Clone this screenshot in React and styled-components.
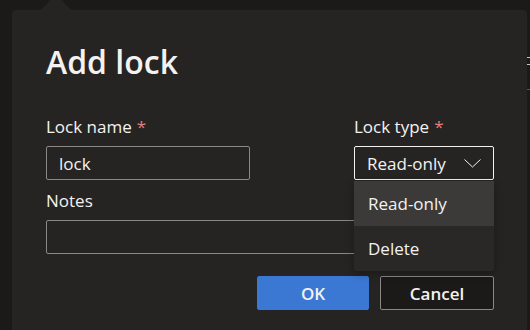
import React from 'react'
import styled, { createGlobalStyle } from 'styled-components'

const GlobalStyle = createGlobalStyle`
    html, body {
        margin: 0;
        padding: 0;
        background: #1b1a19;
    }
    * {
        box-sizing: border-box;
    }
`

const Page = styled.div`
    display: flex;
    width: 530px;
    height: 330px;
    overflow: hidden;
    padding: 10px 0 0 12px;
    background: #1b1a19;
    font-family: "Open Sans", "Noto Sans", sans-serif;
    color: #f3f2f1;
`

const Panel = styled.div`
    position: relative;
    width: 515px;
    background: #252423;
    border-radius: 4px 4px 0 0;
    padding: 32px 33px 0 34px;
`

const Beak = styled.div`
    position: absolute;
    left: 33px;
    top: -11px;
    width: 22px;
    height: 22px;
    background: #252423;
    transform: rotate(45deg);
`

const Edge = styled.div`
    flex: 1;
    display: flex;
    flex-direction: column;
    padding-top: 47px;
    gap: 6px;
`

const EdgeMark = styled.div`
    height: 1px;
    background: ${props => props.faint ? '#5a5856' : '#c8c6c4'};
    margin-top: ${props => props.gap || 0}px;
`

const Title = styled.h1`
    position: relative;
    margin: 0 0 34px;
    font-size: 32px;
    line-height: 40px;
    font-weight: 600;
`

const Row = styled.div`
    display: flex;
    justify-content: space-between;
`

const Field = styled.div`
    width: ${props => props.width}px;
    margin-top: ${props => props.top || 0}px;
`

const Label = styled.div`
    font-size: 17px;
    line-height: 22px;
    margin-bottom: 8px;
`

const Required = styled.span`
    color: #e37d80;
    margin-left: 5px;
`

const Control = styled.div`
    position: relative;
`

const Input = styled.div`
    height: 34px;
    border: 1px solid ${props => props.active ? '#f3f2f1' : '#8a8886'};
    border-radius: 2px;
    padding: 0 12px;
    display: flex;
    align-items: center;
    justify-content: space-between;
    font-size: 17px;
`

const Menu = styled.div`
    position: absolute;
    top: 35px;
    left: 0;
    width: 100%;
    background: #292827;
    border-radius: 0 0 2px 2px;
    box-shadow: 0 3px 8px rgba(0, 0, 0, 0.3);
    z-index: 2;
`

const Option = styled.div`
    height: 45px;
    padding: 0 14px;
    display: flex;
    align-items: center;
    font-size: 17px;
    background: ${props => props.selected ? '#3b3a39' : 'transparent'};
`

const Buttons = styled.div`
    display: flex;
    justify-content: flex-end;
    gap: 11px;
    margin-top: 22px;
`

const Button = styled.button`
    width: ${props => props.width}px;
    height: 34px;
    border-radius: 2px;
    font-family: inherit;
    font-size: 17px;
    font-weight: 600;
    color: #f3f2f1;
    background: ${props => props.primary ? '#3a78d3' : '#1b1a19'};
    border: 1px solid ${props => props.primary ? '#3a78d3' : '#8a8886'};
`

const Chevron = () => (
    <svg width="17" height="9" viewBox="0 0 17 9" fill="none">
        <path d="M0.5 0.5 L8.5 8 L16.5 0.5" stroke="#f3f2f1" strokeWidth="1" />
    </svg>
)

const App = () => {
    return (
        <Page>
            <GlobalStyle />
            <Panel>
                <Beak />
                <Title>Add lock</Title>
                <Row>
                    <Field width={204}>
                        <Label>Lock name<Required>*</Required></Label>
                        <Input>lock</Input>
                    </Field>
                    <Field width={140}>
                        <Label>Lock type<Required>*</Required></Label>
                        <Control>
                            <Input active>
                                Read-only
                                <Chevron />
                            </Input>
                            <Menu>
                                <Option selected>Read-only</Option>
                                <Option>Delete</Option>
                            </Menu>
                        </Control>
                    </Field>
                </Row>
                <Field width={448} top={10}>
                    <Label>Notes</Label>
                    <Input />
                </Field>
                <Buttons>
                    <Button primary width={112}>OK</Button>
                    <Button width={114}>Cancel</Button>
                </Buttons>
            </Panel>
            <Edge>
                <EdgeMark />
                <EdgeMark />
                <EdgeMark faint gap={18} />
            </Edge>
        </Page>
    )
}

export default App
